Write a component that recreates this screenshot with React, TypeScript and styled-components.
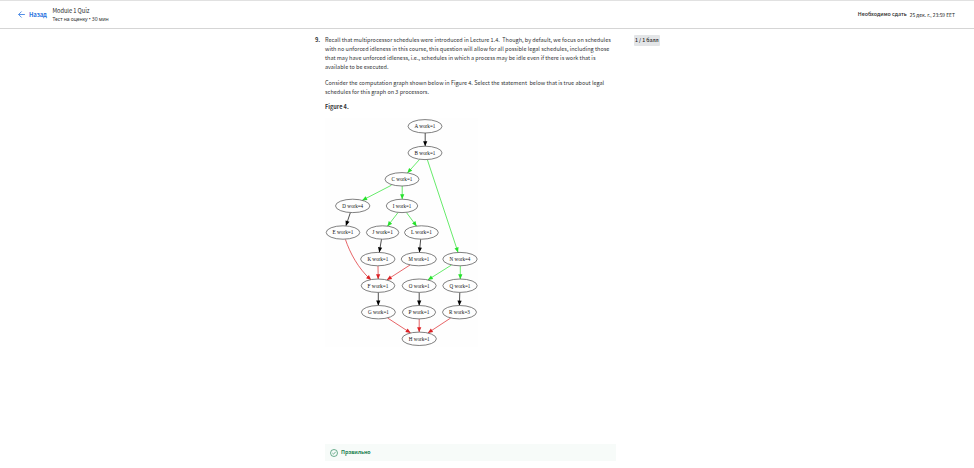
import React from "react";
import styled, { createGlobalStyle } from "styled-components";

const GlobalStyle = createGlobalStyle`
  * { box-sizing: border-box; }
  body { margin: 0; background: #fff; overflow: hidden; }
`;

const Page = styled.div`
  width: 974px;
  height: 468px;
  background: #fff;
  color: #303335;
  font-family: "Noto Sans CJK SC", "Open Sans", sans-serif;
`;

const Header = styled.header`
  display: flex;
  align-items: center;
  height: 29px;
  padding: 0 19px 0 18px;
  border-top: 1px solid #e1e1e1;
  border-bottom: 1px solid #d5d5d5;
`;

const BackLink = styled.a`
  display: flex;
  align-items: center;
  gap: 4px;
  width: 34.5px;
  color: #2a73e0;
`;

const TitleBlock = styled.div`
  display: flex;
  flex-direction: column;
  flex: 1;
  padding-top: 1px;
`;

const Text = styled.span<{ $size: number; $line?: number; $spacing?: number; $weight?: number; $color?: string }>`
  display: block;
  white-space: pre;
  font-size: ${(p) => p.$size}px;
  line-height: ${(p) => p.$line ?? 9}px;
  letter-spacing: ${(p) => p.$spacing ?? 0}px;
  font-weight: ${(p) => p.$weight ?? 400};
  color: ${(p) => p.$color ?? "inherit"};
`;

const Subtitle = styled(Text)`
  font-family: "Noto Sans", sans-serif;
`;

const Deadline = styled.div`
  display: flex;
  gap: 3px;
`;

const Question = styled.main`
  display: grid;
  grid-template-columns: 10px 308.5px 26px;
  padding: 6.7px 0 0 315px;
`;

const Paragraph = styled.div`
  margin-bottom: 6.2px;
`;

const Score = styled.div`
  height: 11px;
  margin-top: -0.3px;
  padding: 0 1.5px;
  background: #e3e5e7;
  border-radius: 1px;
`;

const Graph = styled.svg`
  display: block;
  width: 154px;
  height: 230px;
  margin-top: -0.3px;
`;

const Feedback = styled.div`
  display: flex;
  align-items: center;
  gap: 3.5px;
  width: 291px;
  height: 17px;
  margin-top: 96px;
  padding: 0 0 0.5px 4.5px;
  background: #f7fbf9;
  color: #1f8354;
`;

const paragraphs: string[][] = [
  [
    "Recall that multiprocessor schedules were introduced in Lecture 1.4.\u00a0 Though, by default, we focus on schedules",
    "with no unforced idleness in this course, this question will allow for all possible legal schedules, including those",
    "that may have unforced idleness, i.e., schedules in which a process may be idle even if there is work that is",
    "available to be executed.",
  ],
  [
    "Consider the computation graph shown below in Figure 4. Select the statement\u00a0 below that is true about legal",
    "schedules for this graph on 3 processors.",
  ],
];

const nodes: [string, number, number, number, number][] = [
  ["A", 1, 425, 126.3, 17],
  ["B", 1, 425, 152.9, 17],
  ["C", 1, 402, 179.3, 17],
  ["D", 4, 352.7, 205.9, 17.2],
  ["I", 1, 402, 205.9, 15.7],
  ["E", 1, 343, 232.5, 16.8],
  ["J", 1, 382.6, 232.5, 16.2],
  ["L", 1, 421.4, 232.5, 16.9],
  ["K", 1, 377.8, 259.1, 17.2],
  ["M", 1, 418.8, 259.1, 17.6],
  ["N", 4, 460, 259.1, 17.2],
  ["F", 1, 378, 285.7, 16.8],
  ["O", 1, 419.2, 285.7, 17],
  ["Q", 1, 460, 285.7, 17.2],
  ["G", 1, 378.4, 312.2, 17],
  ["P", 1, 419, 312.2, 16.6],
  ["R", 3, 459.5, 312.2, 17],
  ["H", 1, 419.2, 338.8, 17.2],
];

const GREEN = "#25e22b";
const RED = "#dc2226";
const BLACK = "#000";

// Every edge runs from its start to the tip of its arrow head.
const edges: [string, number, number, number, number][] = [
  [BLACK, 425.2, 133, 425.2, 146],
  [GREEN, 419.6, 159.4, 407.5, 172.9],
  [GREEN, 391.5, 185.2, 362.3, 200.3],
  [GREEN, 402.2, 186, 402.2, 199],
  [GREEN, 427.4, 159.8, 458, 252.3],
  [BLACK, 350.3, 212.8, 346, 225.6],
  [GREEN, 398, 212.6, 387.5, 226.2],
  [GREEN, 406.5, 212.6, 416.6, 226.2],
  [BLACK, 381.5, 239.2, 379.3, 252.2],
  [BLACK, 420.7, 239.2, 419.4, 252.2],
  [RED, 378, 266, 378.2, 279],
  [RED, 410, 265, 387, 279.8],
  [GREEN, 451.5, 265, 428, 279.8],
  [GREEN, 460.3, 266, 460.3, 279],
  [BLACK, 378.3, 292.5, 378.3, 305.4],
  [BLACK, 419.2, 292.5, 419.2, 305.4],
  [BLACK, 459.8, 292.5, 459.4, 305.4],
  [RED, 387.6, 318, 410.5, 332.9],
  [RED, 419.2, 319, 419.2, 332],
  [RED, 450.7, 318, 428, 332.9],
];

const Arrow = ({ color, x, y, angle }: { color: string; x: number; y: number; angle: number }) => (
  <path d="M0.3 0 L-4.8 -2.1 L-4.8 2.1 Z" fill={color} transform={`translate(${x} ${y}) rotate(${angle})`} />
);

const ComputationGraph = () => (
  <Graph viewBox="325 118 154 230">
    <rect x="325" y="118" width="153" height="229" fill="#fefefe" />
    {edges.map(([color, x1, y1, x2, y2], i) => (
      <g key={i}>
        <line x1={x1} y1={y1} x2={x2} y2={y2} stroke={color} strokeWidth={0.7} />
        <Arrow color={color} x={x2} y={y2} angle={(Math.atan2(y2 - y1, x2 - x1) * 180) / Math.PI} />
      </g>
    ))}
    <path d="M345.4 239.4 C350 253 358 268 370.5 279.5" fill="none" stroke={RED} strokeWidth={0.7} />
    <Arrow color={RED} x={371} y={279.9} angle={43} />
    {nodes.map(([name, work, cx, cy, rx]) => (
      <g key={name}>
        <ellipse cx={cx} cy={cy} rx={rx} ry={6.7} fill="#fefefe" stroke="#555" strokeWidth={0.75} />
        <text
          x={cx}
          y={cy + 1.8}
          textAnchor="middle"
          textLength={name === "I" ? 18.5 : 20.8}
          lengthAdjust="spacingAndGlyphs"
          fontFamily="'Liberation Serif', serif"
          fontSize={6}
          fill="#111"
        >
          {`${name} work=${work}`}
        </text>
      </g>
    ))}
  </Graph>
);

export default function App() {
  return (
    <Page>
      <GlobalStyle />
      <Header>
        <BackLink>
          <svg width="7" height="7" viewBox="0 0 7 7" fill="none" stroke="currentColor" strokeWidth="0.8">
            <path d="M6.9 3.5H0.7M3.6 0.5L0.6 3.5L3.6 6.5" />
          </svg>
          <Text $size={5.9} $weight={700} $spacing={-0.15}>Назад</Text>
        </BackLink>
        <TitleBlock>
          <Text $size={5.7} $line={8.5} $spacing={-0.05} $color="#1f1f1f">Module 1 Quiz</Text>
          <Subtitle $size={5.1} $line={8} $spacing={-0.09} $color="#333">Тест на оценку • 30 мин</Subtitle>
        </TitleBlock>
        <Deadline>
          <Text $size={5.3} $weight={500} $color="#1f1f1f">Необходимо сдать</Text>
          <Text $size={4.95} $color="#222">25 дек. г., 23:59 EET</Text>
        </Deadline>
      </Header>
      <Question>
        <Text $size={5.6} $weight={700} $line={9.2}>9.</Text>
        <div>
          {paragraphs.map((lines, i) => (
            <Paragraph key={i}>
              {lines.map((line) => (
                <Text key={line} $size={5.52} $line={9.2}>{line}</Text>
              ))}
            </Paragraph>
          ))}
          <Paragraph>
            <Text $size={5.55} $line={9.2} $weight={700}>Figure 4.</Text>
          </Paragraph>
          <ComputationGraph />
          <Feedback>
            <svg width="8" height="8" viewBox="0 0 8 8" fill="none" stroke="currentColor" strokeWidth="0.65">
              <circle cx="4" cy="4" r="3.5" />
              <path d="M2.4 4.1L3.5 5.2L5.7 2.8" />
            </svg>
            <Text $size={5.3} $weight={700} $spacing={-0.08}>Правильно</Text>
          </Feedback>
        </div>
        <Score>
          <Text $size={5.15} $line={10.5} $weight={500} $color="#222">1 / 1 балл</Text>
        </Score>
      </Question>
    </Page>
  );
}
